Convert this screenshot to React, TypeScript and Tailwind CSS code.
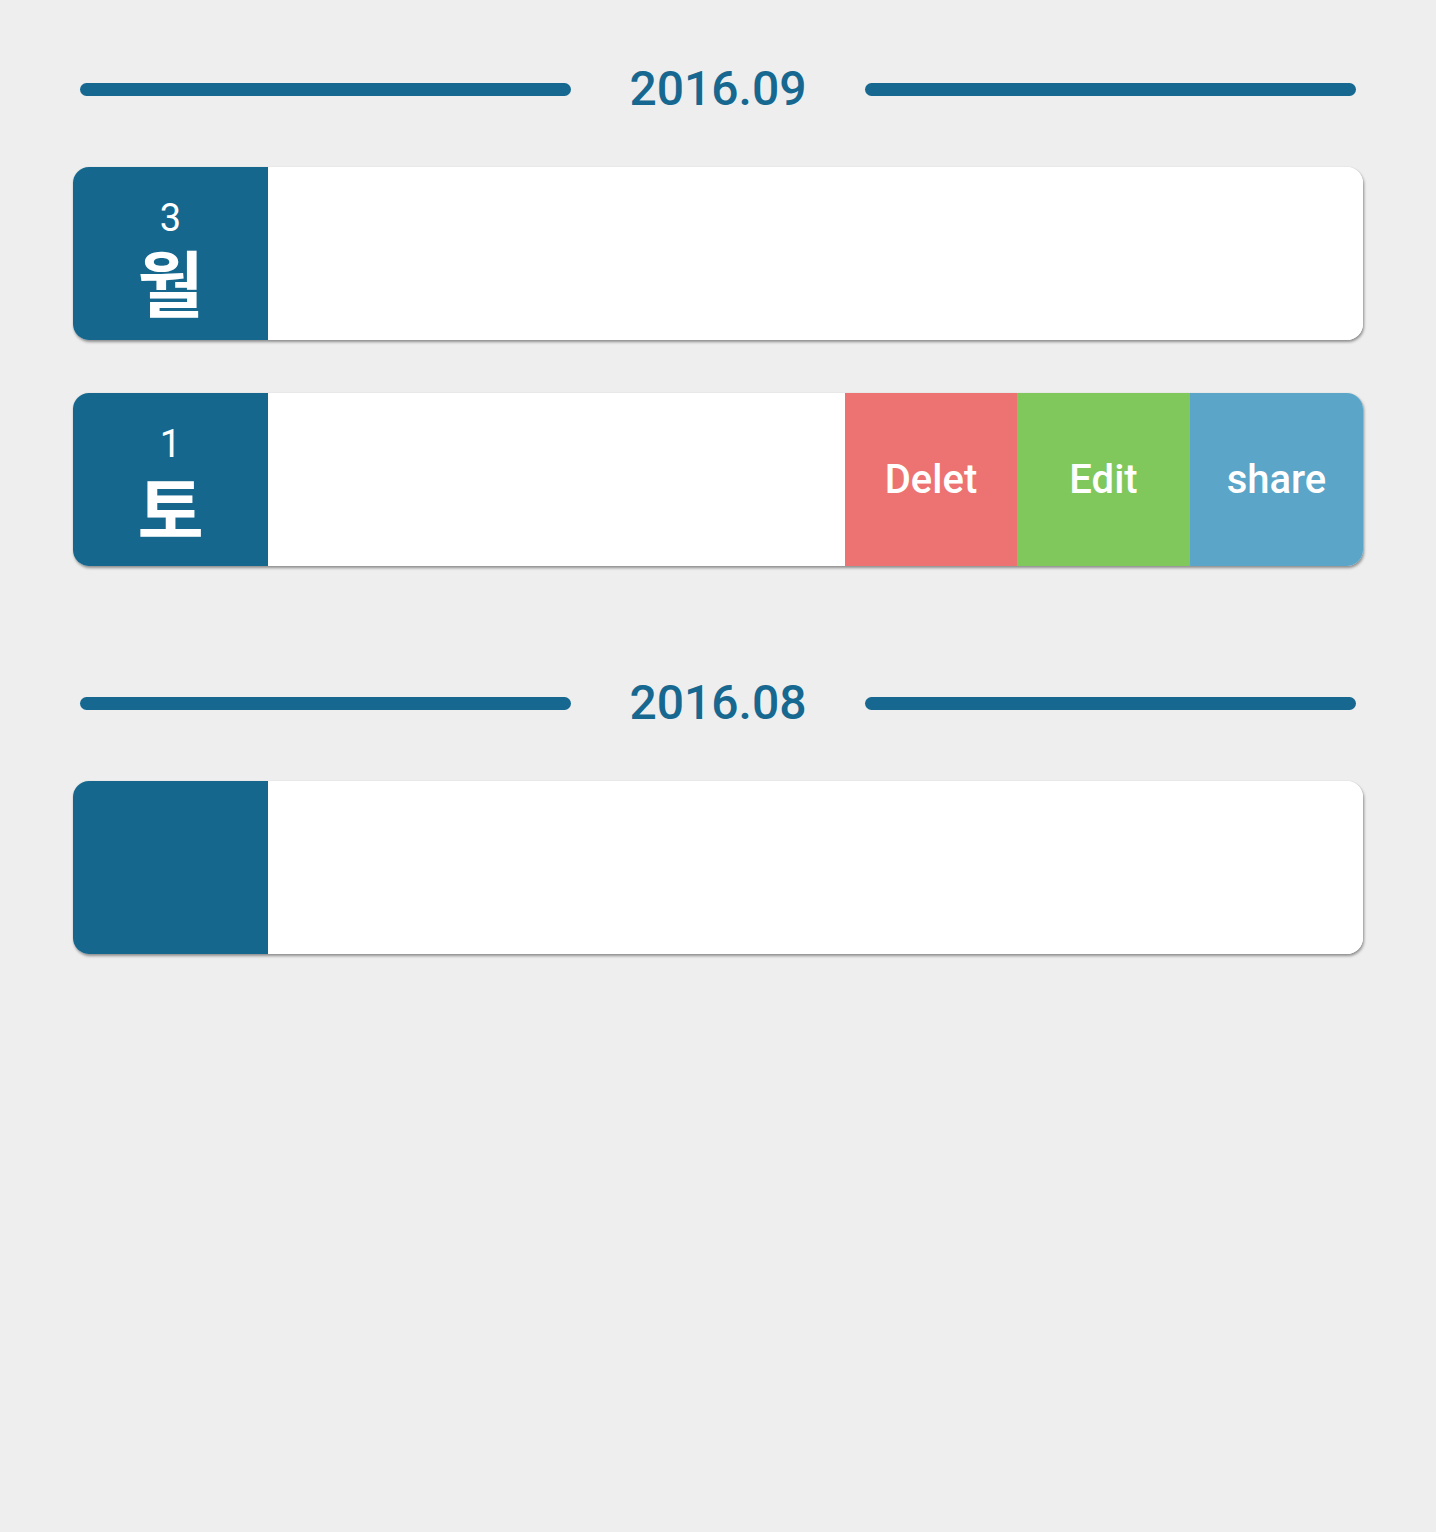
import React from "react";

const font = { fontFamily: "Roboto, 'Noto Sans CJK KR', sans-serif" };

interface Entry {
  day?: string;
  weekday?: string;
  actions?: boolean;
}

interface Month {
  label: string;
  entries: Entry[];
}

const months: Month[] = [
  {
    label: "2016.09",
    entries: [
      { day: "3", weekday: "월" },
      { day: "1", weekday: "토", actions: true },
    ],
  },
  {
    label: "2016.08",
    entries: [{}],
  },
];

function MonthHeader({ label }: { label: string }) {
  return (
    <div className="flex items-center h-[100px] px-[7px] mb-[28px]">
      <div className="flex-1 h-[13px] rounded-full bg-[#166890]" />
      <div className="w-[294px] text-center text-[48px] leading-none font-medium text-[#166890]">
        {label}
      </div>
      <div className="flex-1 h-[13px] rounded-full bg-[#166890]" />
    </div>
  );
}

function EntryCard({ entry }: { entry: Entry }) {
  return (
    <div className="flex h-[173px] rounded-[16px] overflow-hidden bg-white shadow-[1px_2px_3px_rgba(0,0,0,0.4),0_0_1px_rgba(0,0,0,0.15)]">
      <div className="w-[195px] bg-[#15678d] flex flex-col items-center justify-center pt-[14px] text-white">
        {entry.day && (
          <>
            <span className="text-[38px] leading-none">{entry.day}</span>
            <span className="text-[72px] leading-none font-bold mt-[14px]">
              {entry.weekday}
            </span>
          </>
        )}
      </div>
      <div className="flex-1 bg-white" />
      {entry.actions && (
        <div className="flex">
          <button className="w-[172px] bg-[#ed7372] text-white text-[40px] font-medium">
            Delet
          </button>
          <button className="w-[173px] bg-[#80c85c] text-white text-[40px] font-medium">
            Edit
          </button>
          <button className="w-[173px] bg-[#5ba5c8] text-white text-[40px] font-medium">
            share
          </button>
        </div>
      )}
    </div>
  );
}

export default function App() {
  return (
    <div className="min-h-[1532px] bg-[#eeeeee] px-[73px] pt-[39px]" style={font}>
      {months.map((m) => (
        <div key={m.label} className="mb-[87px]">
          <MonthHeader label={m.label} />
          <div className="flex flex-col gap-[53px]">
            {m.entries.map((e, i) => (
              <EntryCard key={i} entry={e} />
            ))}
          </div>
        </div>
      ))}
    </div>
  );
}
